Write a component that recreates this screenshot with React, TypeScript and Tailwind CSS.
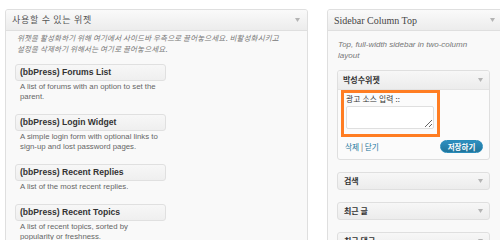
const ko = "font-['Noto_Sans_CJK_KR',sans-serif]";
const sans = "font-['Liberation_Sans','Noto_Sans_CJK_KR',sans-serif]";

function Arrow() {
  return (
    <svg width="5" height="4" viewBox="0 0 5 4" className="shrink-0">
      <path d="M0 0h5L2.5 4z" fill="#b4b4b4" />
    </svg>
  );
}

const leftWidgets = [
  { title: '(bbPress) Forums List', desc: 'A list of forums with an option to set the parent.' },
  { title: '(bbPress) Login Widget', desc: 'A simple login form with optional links to sign-up and lost password pages.' },
  { title: '(bbPress) Recent Replies', desc: 'A list of the most recent replies.' },
  { title: '(bbPress) Recent Topics', desc: 'A list of recent topics, sorted by popularity or freshness.' },
];

const rightWidgets = ['검색', '최근 글', '최근 댓글'];

function PanelHeader({ children, serif }: { children: React.ReactNode; serif?: boolean }) {
  return (
    <div className="flex h-[21px] items-center justify-between border-b border-[#dfdfdf] bg-linear-to-b from-[#fafafa] to-[#ececec] pl-[6px] pr-[7px]">
      <span
        className={
          serif
            ? "font-['Liberation_Serif',serif] text-[10px] text-[#464646]"
            : `${ko} text-[9px] tracking-[0.7px] text-[#555]`
        }
      >
        {children}
      </span>
      <Arrow />
    </div>
  );
}

export default function App() {
  return (
    <div className="flex h-[240px] w-[500px] items-start gap-[19px] overflow-hidden bg-white pl-[5px] pt-[9px]">
      {/* available widgets */}
      <div className="h-[260px] w-[303px] shrink-0 overflow-hidden rounded-[3px] border border-[#dfdfdf] bg-[#f9f9f9]">
        <PanelHeader>사용할 수 있는 위젯</PanelHeader>
        <div className="px-[9px] pt-[1px]">
          <p className={`${ko} pl-[2px] text-[7.5px] italic leading-[11px] tracking-[0.15px] text-[#777]`}>
            위젯을 활성화하기 위해 여기에서 사이드바 우측으로 끌어놓으세요. 비활성화시키고
            <br />
            설정을 삭제하기 위해서는 여기로 끌어놓으세요.
          </p>
          <div className="mt-[10px] flex flex-col">
            {leftWidgets.map((w) => (
              <div key={w.title} className="mb-[12px]">
                <div className="flex h-[17px] w-[151px] items-center rounded-[3px] border border-[#e0e0e0] bg-linear-to-b from-[#f7f7f7] to-[#efefef] px-[4px]">
                  <span className={`${sans} text-[8.6px] font-bold text-[#333]`}>{w.title}</span>
                </div>
                <p className={`${sans} mt-[1px] w-[147px] pl-[5px] text-[7.8px] leading-[10px] text-[#666]`}>
                  {w.desc}
                </p>
              </div>
            ))}
          </div>
        </div>
      </div>

      {/* sidebar column top */}
      <div className="h-[260px] w-[176px] shrink-0 overflow-hidden rounded-[3px] border border-[#dfdfdf] bg-[#f9f9f9]">
        <PanelHeader serif>Sidebar Column Top</PanelHeader>
        <div className="pl-[9px] pr-[13px] pt-[8px]">
          <p className={`${sans} pl-[1px] text-[8px] italic leading-[11px] text-[#777]`}>
            Top, full-width sidebar in two-column layout
          </p>

          <div className="mt-[9px] w-[153px] overflow-hidden rounded-[3px] border border-[#dfdfdf] bg-[#fbfbfb]">
            <div className="flex h-[19px] items-center justify-between border-b border-[#e3e3e3] bg-linear-to-b from-[#f7f7f7] to-[#ececec] pl-[5px] pr-[6px]">
              <span className={`${ko} text-[8px] font-bold text-[#333]`}>박성수위젯</span>
              <Arrow />
            </div>
            <div className="pl-[3px] pr-[6px] pb-[6px]">
              <div className="w-[99px] border-[3px] border-[#ff7d22] px-[2px] pb-[5px] pt-[1px]">
                <div className={`${ko} text-[7.7px] leading-[10px] tracking-[0.2px] text-[#333]`}>광고 소스 입력 ::</div>
                <textarea
                  readOnly
                  className="mt-[2px] block h-[23px] w-[88px] rounded-[2px] border border-[#dfdfdf] bg-white"
                />
              </div>
              <div className="mt-[3px] flex items-center justify-between pl-[4px]">
                <span className={`${ko} text-[7.7px] text-[#21759b]`}>
                  삭제 <span className="text-[#555]">|</span> 닫기
                </span>
                <span
                  className={`${ko} flex h-[13px] w-[43px] items-center justify-center rounded-full border border-[#298cba] bg-linear-to-b from-[#2e8fc0] to-[#21759b] text-[7.5px] font-bold text-white`}
                >
                  저장하기
                </span>
              </div>
            </div>
          </div>

          {rightWidgets.map((t) => (
            <div
              key={t}
              className="mt-[12px] flex h-[18px] w-[153px] items-center justify-between rounded-[3px] border border-[#dfdfdf] bg-linear-to-b from-[#f7f7f7] to-[#ececec] pl-[6px] pr-[6px]"
            >
              <span className={`${ko} text-[8px] font-bold text-[#333]`}>{t}</span>
              <Arrow />
            </div>
          ))}
        </div>
      </div>
    </div>
  );
}
